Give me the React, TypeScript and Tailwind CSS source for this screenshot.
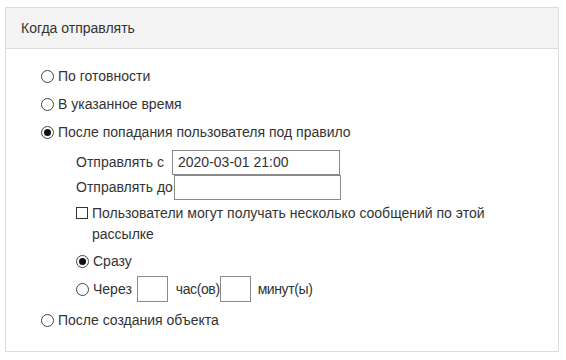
function Radio({ checked = false }: { checked?: boolean }) {
  return (
    <span className="flex h-[13px] w-[13px] shrink-0 items-center justify-center rounded-full border border-[#444] bg-white">
      {checked && <span className="h-[7px] w-[7px] rounded-full bg-[#111]" />}
    </span>
  );
}

function Box({ className = "" }: { className?: string }) {
  return <span className={"block border border-[#8a8a8a] bg-white " + className} />;
}

export default function App() {
  return (
    <div className="h-[360px] w-[566px] bg-white pl-[5px] pt-[7px] font-['Liberation_Sans',Arial,sans-serif] text-[#333]">
      <div className="h-[345px] w-[554px] border border-[#dcdcdc]">
        <div className="flex h-[41px] items-center border-b border-[#dcdcdc] bg-[#f4f4f4] pl-[15px] text-[14px]">
          Когда отправлять
        </div>

        <div className="flex flex-col pl-[35px] pt-[13px] text-[14px]">
          <div className="flex h-[28px] items-center gap-[4px]">
            <Radio />
            По готовности
          </div>
          <div className="flex h-[28px] items-center gap-[4px]">
            <Radio />В указанное время
          </div>
          <div className="flex h-[28px] items-center gap-[4px]">
            <Radio checked />
            После попадания пользователя под правило
          </div>

          <div className="flex flex-col pl-[35px] pt-[4px]">
            <div className="flex h-[25px] items-center">
              <span className="w-[96px]">Отправлять с</span>
              <span className="flex h-[25px] w-[168px] items-center border border-[#8a8a8a] px-[5px]">
                2020-03-01 21:00
              </span>
            </div>
            <div className="flex h-[25px] items-center">
              <span className="w-[98px]">Отправлять до</span>
              <Box className="h-[25px] w-[167px]" />
            </div>

            <div className="mt-[3px] flex items-start gap-[4px]">
              <span className="mt-[4px] block h-[12px] w-[12px] shrink-0 border border-[#333] bg-white" />
              <span className="w-[410px] leading-[21px]">
                Пользователи могут получать несколько сообщений по этой рассылке
              </span>
            </div>

            <div className="mt-[2px] flex h-[28px] items-center gap-[4px]">
              <Radio checked />
              Сразу
            </div>
            <div className="flex h-[28px] items-center gap-[4px]">
              <Radio />
              Через
              <Box className="ml-[1px] h-[26px] w-[31px]" />
              <span className="ml-[4px] tracking-[-0.4px]">час(ов)</span>
              <Box className="-ml-[4px] h-[26px] w-[31px]" />
              <span className="ml-[3px] tracking-[-0.4px]">минут(ы)</span>
            </div>
          </div>

          <div className="mt-[3px] flex h-[28px] items-center gap-[4px]">
            <Radio />
            После создания объекта
          </div>
        </div>
      </div>
    </div>
  );
}
